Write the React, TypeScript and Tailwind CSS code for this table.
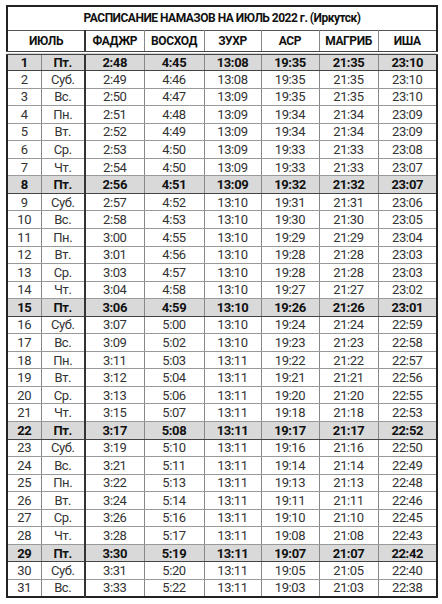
import React from 'react';

type Row = [number, string, string, string, string, string, string, string];

const rows: Row[] = [
  [1, 'Пт.', '2:48', '4:45', '13:08', '19:35', '21:35', '23:10'],
  [2, 'Суб.', '2:49', '4:46', '13:08', '19:35', '21:35', '23:10'],
  [3, 'Вс.', '2:50', '4:47', '13:09', '19:35', '21:35', '23:10'],
  [4, 'Пн.', '2:51', '4:48', '13:09', '19:34', '21:34', '23:09'],
  [5, 'Вт.', '2:52', '4:49', '13:09', '19:34', '21:34', '23:09'],
  [6, 'Ср.', '2:53', '4:50', '13:09', '19:33', '21:33', '23:08'],
  [7, 'Чт.', '2:54', '4:50', '13:09', '19:33', '21:33', '23:07'],
  [8, 'Пт.', '2:56', '4:51', '13:09', '19:32', '21:32', '23:07'],
  [9, 'Суб.', '2:57', '4:52', '13:10', '19:31', '21:31', '23:06'],
  [10, 'Вс.', '2:58', '4:53', '13:10', '19:30', '21:30', '23:05'],
  [11, 'Пн.', '3:00', '4:55', '13:10', '19:29', '21:29', '23:04'],
  [12, 'Вт.', '3:01', '4:56', '13:10', '19:28', '21:28', '23:03'],
  [13, 'Ср.', '3:03', '4:57', '13:10', '19:28', '21:28', '23:03'],
  [14, 'Чт.', '3:04', '4:58', '13:10', '19:27', '21:27', '23:02'],
  [15, 'Пт.', '3:06', '4:59', '13:10', '19:26', '21:26', '23:01'],
  [16, 'Суб.', '3:07', '5:00', '13:10', '19:24', '21:24', '22:59'],
  [17, 'Вс.', '3:09', '5:02', '13:10', '19:23', '21:23', '22:58'],
  [18, 'Пн.', '3:11', '5:03', '13:11', '19:22', '21:22', '22:57'],
  [19, 'Вт.', '3:12', '5:04', '13:11', '19:21', '21:21', '22:56'],
  [20, 'Ср.', '3:13', '5:06', '13:11', '19:20', '21:20', '22:55'],
  [21, 'Чт.', '3:15', '5:07', '13:11', '19:18', '21:18', '22:53'],
  [22, 'Пт.', '3:17', '5:08', '13:11', '19:17', '21:17', '22:52'],
  [23, 'Суб.', '3:19', '5:10', '13:11', '19:16', '21:16', '22:50'],
  [24, 'Вс.', '3:21', '5:11', '13:11', '19:14', '21:14', '22:49'],
  [25, 'Пн.', '3:22', '5:13', '13:11', '19:13', '21:13', '22:48'],
  [26, 'Вт.', '3:24', '5:14', '13:11', '19:11', '21:11', '22:46'],
  [27, 'Ср.', '3:26', '5:16', '13:11', '19:10', '21:10', '22:45'],
  [28, 'Чт.', '3:28', '5:17', '13:11', '19:08', '21:08', '22:43'],
  [29, 'Пт.', '3:30', '5:19', '13:11', '19:07', '21:07', '22:42'],
  [30, 'Суб.', '3:31', '5:20', '13:11', '19:05', '21:05', '22:40'],
  [31, 'Вс.', '3:33', '5:22', '13:11', '19:03', '21:03', '22:38'],
];

const headers = ['ФАДЖР', 'ВОСХОД', 'ЗУХР', 'АСР', 'МАГРИБ', 'ИША'];

export default function App() {
  return (
    <div className="w-[442px] h-[604px] bg-white pl-[6px] pt-[5px] font-['Roboto','Liberation_Sans',sans-serif]">
      <table className="w-[430px] table-fixed border-collapse border-2 border-[#222] text-[13px] tracking-[-0.4px] leading-none text-center">
        <colgroup>
          <col className="w-[34px]" />
          <col className="w-[44px]" />
          <col className="w-[59px]" />
          <col className="w-[60px]" />
          <col className="w-[57px]" />
          <col className="w-[58px]" />
          <col className="w-[59px]" />
          <col className="w-[59px]" />
        </colgroup>
        <thead>
          <tr className="h-[24px]">
            <th
              colSpan={8}
              className="border-b border-[#555] font-bold text-[12px] tracking-[-0.5px] text-[#111]"
            >
              РАСПИСАНИЕ НАМАЗОВ НА ИЮЛЬ 2022 г. (Иркутск)
            </th>
          </tr>
          <tr className="h-[23px] text-[12px] tracking-[-0.4px]">
            <th
              colSpan={2}
              className="border-r-2 border-r-[#333] border-b-4 border-double border-b-[#444] font-bold text-[#111]"
            >
              ИЮЛЬ
            </th>
            {headers.map((h) => (
              <th
                key={h}
                className="border-r border-r-[#888] border-b-4 border-double border-b-[#444] font-bold text-[#111]"
              >
                {h}
              </th>
            ))}
          </tr>
        </thead>
        <tbody>
          {rows.map((r) => {
            const fri = r[1] === 'Пт.';
            return (
              <tr
                key={r[0]}
                className={`h-[17.55px] ${fri ? 'bg-[#d9d9d9] font-bold text-[#111]' : 'text-[#333]'}`}
              >
                {r.map((c, i) => (
                  <td
                    key={i}
                    className={`p-0 border-b ${fri ? 'border-b-[#444]' : 'border-b-[#9a9a9a]'} ${
                      i === 1 ? 'border-r-2 border-r-[#333]' : 'border-r border-r-[#888]'
                    }`}
                  >
                    {c}
                  </td>
                ))}
              </tr>
            );
          })}
        </tbody>
      </table>
    </div>
  );
}
